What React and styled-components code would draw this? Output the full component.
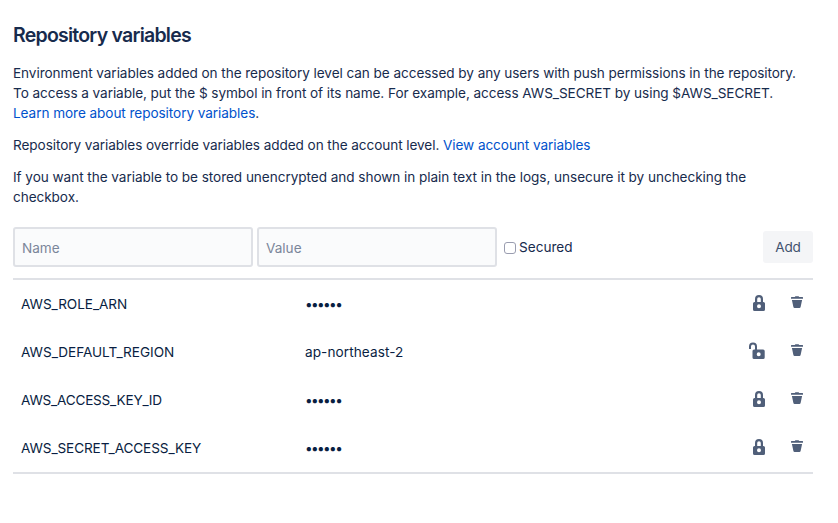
import React from 'react';
import styled, { createGlobalStyle } from 'styled-components';

const Global = createGlobalStyle`
  *{box-sizing:border-box}
  body{margin:0;background:#fff;color:#172b4d;font:13.6px/20px Inter,sans-serif}
`;
const Page = styled.main`
  width: 838px;
  height: 523px;
  padding: 23px 25px 0 13px;
  overflow: hidden;
`;
const Title = styled.h1`
  margin: 0 0 16px;
  font-size: 19.5px;
  line-height: 24px;
  font-weight: 580;
  letter-spacing: -0.76px;
`;
const Line = styled.span`
  display: block;
  width: max-content;
  white-space: nowrap;
  letter-spacing: ${p => p.$spacing ?? -0.07}px;
`;
const Text = styled.p`
  margin: 0 0 12px;
`;
const Link = styled.a`
  color: #0052cc;
  text-decoration: none;
`;
const Form = styled.form`
  display: flex;
  align-items: center;
  height: 40px;
  margin-top: 20px;
`;
const Field = styled.input`
  width: 240px;
  height: 40px;
  margin: 0 4px 0 0;
  padding: 1px 7px 0;
  border: 2px solid #dfe1e6;
  border-radius: 3px;
  background: #fafbfc;
  font: inherit;
  color: #172b4d;
  &::placeholder { color: #7a869a; opacity: 1; }
`;
const Secured = styled.label`
  display: flex;
  align-items: center;
  gap: 3px;
  margin-left: 3px;
`;
const Check = styled.input`
  appearance: none;
  width: 12px;
  height: 12px;
  margin: 2px 0 0;
  border: 1px solid #9a9db0;
  border-radius: 3px;
  background: #fff;
`;
const Add = styled.button`
  width: 50px;
  height: 32px;
  margin-left: auto;
  padding: 0;
  border: 0;
  border-radius: 3px;
  background: #f4f5f7;
  color: #42526e;
  font: inherit;
  letter-spacing: -0.2px;
`;
const List = styled.div`
  margin-top: 11px;
  border-top: 2px solid #dfe1e6;
  border-bottom: 2px solid #dfe1e6;
`;
const Row = styled.div`
  display: grid;
  grid-template-columns: 284px 1fr 24px 24px;
  column-gap: 0;
  align-items: center;
  height: 48px;
  padding: 0 4px 0 8px;
`;
const Cell = styled(Line)`
  color: #091e42;
`;
const Icon = styled.svg`
  display: block;
  width: 24px;
  height: 24px;
  margin: 0 0 ${p => p.$lift}px ${p => p.$shift || 0}px;
  fill: #505f79;
`;

const Lock = () => (
  <Icon viewBox="0 0 24 24" $lift={2} $shift={-14}>
    <path fillRule="evenodd" d="M6 12.6a1.600 1.600 0 0 1 1.600-1.600h8.800a1.600 1.600 0 0 1 1.600 1.600v5.800a1.600 1.600 0 0 1-1.600 1.600H7.600a1.600 1.600 0 0 1-1.600-1.600zM12 13.300a2 2 0 1 0 0 4 2 2 0 0 0 0-4z" />
    <path d="M8 11.200V8a4 4 0 0 1 8 0v3.200h-2.200V8a1.800 1.800 0 0 0-3.600 0v3.200z" />
  </Icon>
);
const Unlock = () => (
  <Icon viewBox="0 0 24 24" $lift={2} $shift={-14}>
    <path fillRule="evenodd" d="M5.500 12a1.600 1.600 0 0 1 1.600-1.600h9a1.600 1.600 0 0 1 1.600 1.600v6.400a1.600 1.600 0 0 1-1.600 1.600h-9a1.600 1.600 0 0 1-1.600-1.600zM11.700 13.200a2 2 0 1 0 0 4 2 2 0 0 0 0-4z" />
    <path d="M2 10V7.600a4 4 0 0 1 8 0V11H8V7.600a2 2 0 0 0-4 0V10z" />
  </Icon>
);
const Trash = () => (
  <Icon viewBox="0 0 24 24" $lift={4}>
    <path d="M6 7.500A.5.5 0 0 1 6.500 7H9.800a1 1 0 0 1 .9-.8h2.600a1 1 0 0 1 .9.800h3.300a.5.5 0 0 1 .5.5V8.800H6z" />
    <path d="M6.900 9.900h10.200l-1.500 7.200a1.200 1.200 0 0 1-1.200.9H9.600a1.200 1.200 0 0 1-1.200-.9z" />
  </Icon>
);

const rows = [
  { name: 'AWS_ROLE_ARN', value: '••••••', secured: true, spacing: -0.06 },
  { name: 'AWS_DEFAULT_REGION', value: 'ap-northeast-2', secured: false, valueSpacing: 0.08, spacing: -0.03 },
  { name: 'AWS_ACCESS_KEY_ID', value: '••••••', secured: true, spacing: -0.22 },
  { name: 'AWS_SECRET_ACCESS_KEY', value: '••••••', secured: true, spacing: -0.11 },
];

export default function App() {
  return (
    <>
      <Global />
      <Page>
        <Title>Repository variables</Title>
        <Text>
          <Line>Environment variables added on the repository level can be accessed by any users with push permissions in the repository.</Line>
          <Line>To access a variable, put the $ symbol in front of its name. For example, access AWS_SECRET by using $AWS_SECRET.</Line>
          <Line><Link>Learn more about repository variables</Link>.</Line>
        </Text>
        <Text>
          <Line $spacing={-0.08}>Repository variables override variables added on the account level. <Link>View account variables</Link></Line>
        </Text>
        <Text>
          <Line $spacing={-0.055}>If you want the variable to be stored unencrypted and shown in plain text in the logs, unsecure it by unchecking the</Line>
          <Line>checkbox.</Line>
        </Text>
        <Form>
          <Field placeholder="Name" />
          <Field placeholder="Value" />
          <Secured><Check type="checkbox" />Secured</Secured>
          <Add type="button">Add</Add>
        </Form>
        <List>
          {rows.map(row => (
            <Row key={row.name}>
              <Cell $spacing={row.spacing}>{row.name}</Cell>
              <Cell $spacing={row.valueSpacing ?? -1.62}>{row.value}</Cell>
              {row.secured ? <Lock /> : <Unlock />}
              <Trash />
            </Row>
          ))}
        </List>
      </Page>
    </>
  );
}
